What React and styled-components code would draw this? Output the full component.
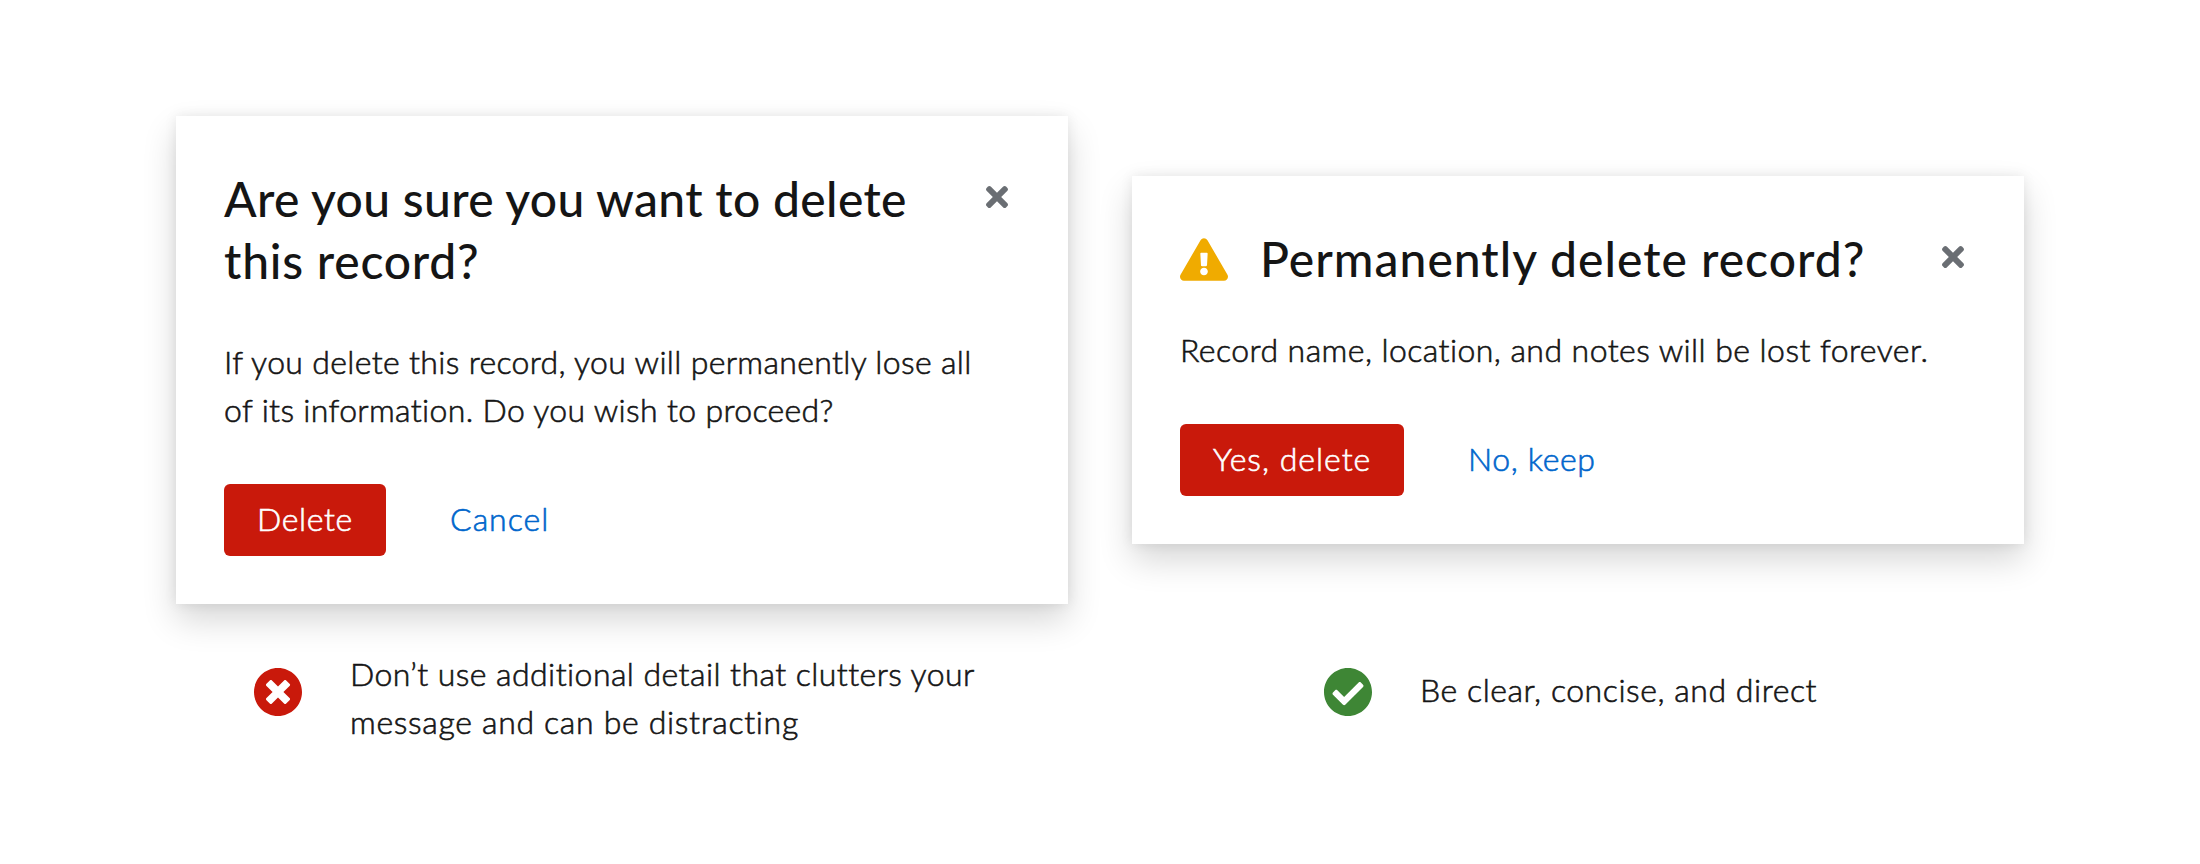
import React from "react";
import styled, { createGlobalStyle } from "styled-components";
import { FaTimes, FaTimesCircle, FaCheckCircle, FaExclamationTriangle } from "react-icons/fa";

const GlobalStyle = createGlobalStyle`
  *, *::before, *::after {
    box-sizing: border-box;
  }
  body {
    margin: 0;
    background: #fff;
    color: #151515;
    font-family: Lato, "Open Sans", sans-serif;
    font-weight: 300;
  }
`;

const Page = styled.main`
  display: grid;
  grid-template-columns: 892px 892px;
  grid-template-rows: 488px 1fr;
  column-gap: 64px;
  width: 2200px;
  height: 864px;
  padding: 116px 176px 0;
  overflow: hidden;
`;

const Dialog = styled.section`
  display: flex;
  flex-direction: column;
  align-self: ${(p) => (p.$centered ? "center" : "start")};
  padding: 52px 48px 48px;
  background: #fff;
  box-shadow: 0 16px 32px rgba(3, 3, 3, 0.16), 0 0 12px rgba(3, 3, 3, 0.08);
`;

const DialogHeader = styled.header`
  display: flex;
  align-items: flex-start;
`;

const Title = styled.h1`
  flex: 1;
  margin: 0;
  font-size: 48px;
  font-weight: 500;
  line-height: 62px;
  white-space: nowrap;
`;

const Line = styled.span`
  display: block;
  letter-spacing: ${(p) => p.$tracking}px;
`;

const WarningIcon = styled(FaExclamationTriangle)`
  flex: none;
  width: 48px;
  height: 43px;
  margin: 10px 32px 0 0;
  color: #f0ab00;
`;

const CloseButton = styled.button`
  display: flex;
  flex: none;
  margin: 13px 12px 0 0;
  padding: 0;
  border: 0;
  background: none;
  color: #6a6e73;

  svg {
    width: 22px;
    height: 32px;
  }
`;

const Text = styled.p`
  margin: 0;
  font-size: 32px;
  line-height: 48px;
  white-space: nowrap;
  -webkit-text-stroke: 0.6px currentColor;
`;

const DialogText = styled(Text)`
  margin-top: ${(p) => p.$gap}px;
`;

const Actions = styled.footer`
  display: flex;
  gap: 32px;
  margin-top: 50px;
`;

const Button = styled.button`
  height: 72px;
  padding: 0 0 3px 32px;
  border: 0;
  border-radius: 6px;
  font: inherit;
  font-size: 32px;
  line-height: 48px;
  text-align: left;
  white-space: nowrap;
  letter-spacing: ${(p) => p.$tracking}px;
  -webkit-text-stroke: 0.6px currentColor;
`;

const DangerButton = styled(Button)`
  width: ${(p) => p.$width}px;
  padding-left: 33px;
  background: #c9190b;
  color: #fff;
`;

const LinkButton = styled(Button)`
  background: none;
  color: #06c;
`;

const Caption = styled.div`
  display: flex;
  align-items: flex-start;
  gap: 48px;
  padding: ${(p) => p.$top}px 0 0 ${(p) => p.$indent}px;
`;

const StatusIcon = styled.svg`
  flex: none;
  width: 48px;
  height: 48px;
  margin-top: ${(p) => p.$offset}px;
  color: ${(p) => p.$color};
`;

function Close() {
  return (
    <CloseButton aria-label="Close">
      <FaTimes />
    </CloseButton>
  );
}

export default function App() {
  return (
    <>
      <GlobalStyle />
      <Page>
        <Dialog>
          <DialogHeader>
            <Title>
              <Line $tracking={0.34}>Are you sure you want to delete</Line>
              <Line $tracking={0.78}>this record?</Line>
            </Title>
            <Close />
          </DialogHeader>
          <DialogText $gap={46}>
            <Line $tracking={0.34}>If you delete this record, you will permanently lose all</Line>
            <Line $tracking={0.34}>of its information. Do you wish to proceed?</Line>
          </DialogText>
          <Actions>
            <DangerButton $width={162} $tracking={0.6}>Delete</DangerButton>
            <LinkButton $tracking={1}>Cancel</LinkButton>
          </Actions>
        </Dialog>

        <Dialog $centered>
          <DialogHeader>
            <WarningIcon />
            <Title>
              <Line $tracking={1.01}>Permanently delete record?</Line>
            </Title>
            <Close />
          </DialogHeader>
          <DialogText $gap={36}>
            <Line $tracking={0.44}>Record name, location, and notes will be lost forever.</Line>
          </DialogText>
          <Actions>
            <DangerButton $width={224} $tracking={1}>Yes, delete</DangerButton>
            <LinkButton $tracking={0.65}>No, keep</LinkButton>
          </Actions>
        </Dialog>

        <Caption $top={46} $indent={78}>
          <StatusIcon as={FaTimesCircle} viewBox="8 8 496 496" $color="#c9190b" $offset={18} />
          <Text>
            <Line $tracking={0.43}>Don’t use additional detail that clutters your</Line>
            <Line $tracking={0.67}>message and can be distracting</Line>
          </Text>
        </Caption>

        <Caption $top={62} $indent={192}>
          <StatusIcon as={FaCheckCircle} viewBox="8 8 496 496" $color="#3e8635" $offset={2} />
          <Text>
            <Line $tracking={0.55}>Be clear, concise, and direct</Line>
          </Text>
        </Caption>
      </Page>
    </>
  );
}
